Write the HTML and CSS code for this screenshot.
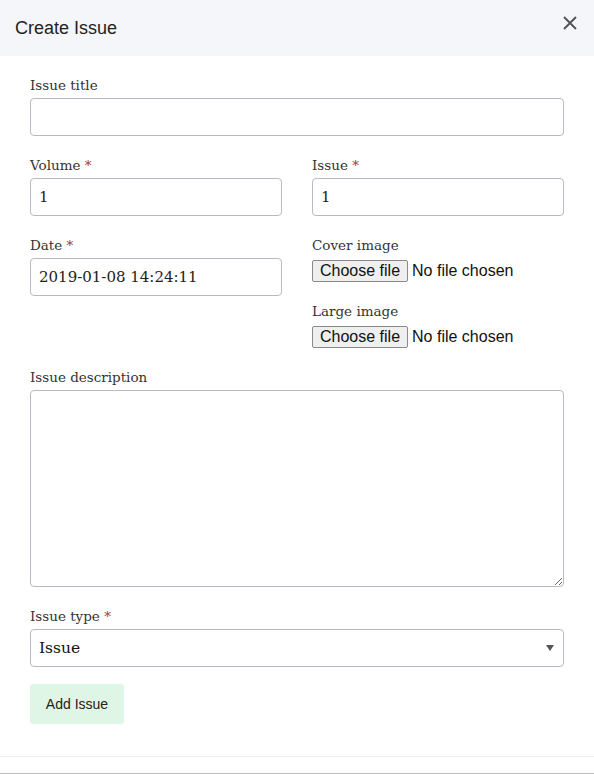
FILE: index.html
```html
<!DOCTYPE html>
<html lang="en">
<head>
<meta charset="utf-8">
<title>Create Issue</title>
<link rel="stylesheet" href="styles.css">
</head>
<body>
<div class="modal">
  <header class="modal-header">
    <h1 class="modal-title">Create Issue</h1>
    <button class="close" aria-label="Close">
      <svg width="14" height="14" viewBox="0 0 14 14"><path d="M1 1 L13 13 M13 1 L1 13" stroke="#555" stroke-width="2" fill="none"/></svg>
    </button>
  </header>
  <form class="modal-body">
    <div class="field">
      <label class="label">Issue title</label>
      <input class="input" type="text">
    </div>
    <div class="row">
      <div class="col">
        <div class="field">
          <label class="label">Volume <span class="req">*</span></label>
          <input class="input" type="text" value="1">
        </div>
        <div class="field">
          <label class="label">Date <span class="req">*</span></label>
          <input class="input" type="text" value="2019-01-08 14:24:11">
        </div>
      </div>
      <div class="col">
        <div class="field">
          <label class="label">Issue <span class="req">*</span></label>
          <input class="input" type="text" value="1">
        </div>
        <div class="field">
          <span class="label label-file">Cover image</span>
          <label class="file">
            <input class="file-native" type="file">
            <span class="file-btn">Choose file</span>
            <span class="file-name">No file chosen</span>
          </label>
        </div>
        <div class="field">
          <span class="label label-file">Large image</span>
          <label class="file">
            <input class="file-native" type="file">
            <span class="file-btn">Choose file</span>
            <span class="file-name">No file chosen</span>
          </label>
        </div>
      </div>
    </div>
    <div class="field">
      <label class="label">Issue description</label>
      <textarea class="textarea"></textarea>
    </div>
    <div class="field">
      <label class="label">Issue type <span class="req">*</span></label>
      <div class="select-wrap">
        <select class="select"><option>Issue</option></select>
      </div>
    </div>
    <button type="button" class="btn">Add Issue</button>
  </form>
  <div class="modal-footer"></div>
</div>
</body>
</html>
```
FILE: styles.css
```css
* { box-sizing: border-box; }
html, body { margin: 0; padding: 0; background: #fff; }
body { font-family: "DejaVu Serif", serif; color: #222; }

.modal { width: 594px; height: 774px; display: flex; flex-direction: column; }

.modal-header {
  height: 56px;
  background: #f5f6fa;
  display: flex;
  align-items: center;
  justify-content: space-between;
  padding: 0 17px 0 15px;
  flex: none;
}
.modal-title {
  margin: 0;
  font-family: "Liberation Sans", Arial, sans-serif;
  font-weight: normal;
  font-size: 18px;
  color: #222;
}
.close {
  border: 0;
  background: none;
  padding: 0;
  margin-top: -10px;
  width: 14px;
  height: 14px;
  display: flex;
}

.modal-body {
  padding: 19px 30px 32px 30px;
  flex: none;
}

.field { display: flex; flex-direction: column; align-items: stretch; margin-bottom: 19px; min-width: 0; }
.label {
  font-size: 13.5px;
  line-height: 20px;
  color: #333;
  margin-bottom: 3px;
}
.label-file { margin-bottom: 5px; }
.req { color: #a83232; }

.input {
  height: 38px;
  border: 1px solid #babac2;
  border-radius: 4px;
  padding: 0 8px;
  font-family: "DejaVu Serif", serif;
  font-size: 15px;
  color: #222;
  background: #fff;
  width: 100%;
}

.row { display: grid; grid-template-columns: 1fr 1fr; column-gap: 30px; }
.col { display: flex; flex-direction: column; min-width: 0; }

.file {
  display: flex;
  align-items: center;
  font-family: "Liberation Sans", Arial, sans-serif;
  font-size: 16px;
  color: #111;
  height: 22px;
}
.file-native { display: none; }
.file-btn {
  height: 22px;
  line-height: 20px;
  padding: 0 7px;
  margin-right: 4px;
  background: #efefef;
  border: 1px solid #8a8a8a;
  border-radius: 2px;
  color: #111;
}
.file-name { line-height: 22px; }

.textarea {
  height: 197px;
  border: 1px solid #babac2;
  border-radius: 4px;
  font-family: "DejaVu Serif", serif;
  font-size: 15px;
  padding: 6px 8px;
  display: block;
}

.select-wrap { position: relative; }
.select-wrap::after {
  content: "";
  position: absolute;
  right: 10px;
  top: 16px;
  border-left: 4px solid transparent;
  border-right: 4px solid transparent;
  border-top: 6px solid #555;
  pointer-events: none;
}
.select {
  display: block;
  width: 100%;
  height: 38px;
  appearance: none;
  -webkit-appearance: none;
  border: 1px solid #babac2;
  border-radius: 4px;
  padding: 0 8px;
  background: #fff;
  font-family: "DejaVu Serif", serif;
  font-size: 15.5px;
  color: #111;
}

.btn {
  margin-top: -2px;
  width: 94px;
  height: 40px;
  border: 0;
  border-radius: 3px;
  background: #dff5e5;
  font-family: "Liberation Sans", Arial, sans-serif;
  font-size: 14px;
  color: #222;
  padding: 0;
}

.modal-footer {
  flex: 1;
  border-top: 1px solid #eeeef2;
  border-bottom: 1px solid #bdbdbd;
}
```
